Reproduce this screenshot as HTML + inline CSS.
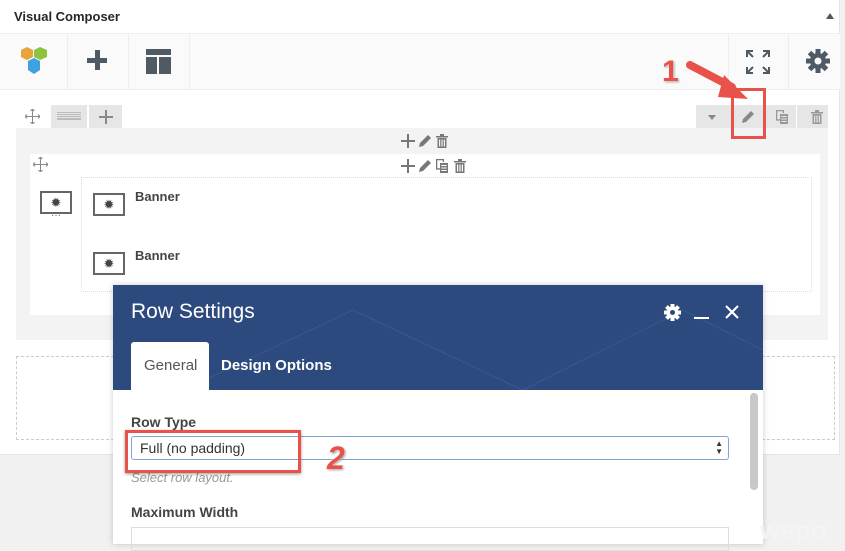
<!DOCTYPE html>
<html><head><style>
*{margin:0;padding:0;box-sizing:border-box}
body{width:845px;height:544px;overflow:hidden;background:#f1f1f1;font-family:"Liberation Sans",sans-serif;position:relative}
.a{position:absolute}
</style></head><body>
<svg width="0" height="0" style="position:absolute">
<defs>
<g id="tr"><rect x="1" y="3" width="12" height="1.5"/><rect x="5" y="1" width="4" height="2"/><path d="M2.5,5 h9 v10 h-9z M4,6.5 v7 h1.2 v-7z M6.4,6.5 v7 h1.2 v-7z M8.8,6.5 v7 h1.2 v-7z" fill-rule="evenodd"/></g>
<g id="pe"><path d="M2,14 L3,10 L11,2 L14,5 L6,13 Z"/></g>
<g id="cp"><path d="M1,1 h8 v3 h-1.3 v-1.7 h-5.4 v8 h2.7 v1.3 h-4z"/><path d="M5,5 h8 v10 h-8z M6.3,7 v1 h5.4 v-1z M6.3,9.5 v1 h5.4 v-1z M6.3,12 v1 h5.4 v-1z" fill-rule="evenodd"/></g>
<g id="pl"><rect x="0" y="6" width="14" height="2"/><rect x="6" y="0" width="2" height="14"/></g>
</defs></svg>
<div class="a" style="left:0;top:0;width:840px;height:455px;background:#fff;border-right:1px solid #e5e5e5;border-bottom:1px solid #e5e5e5"></div>
<div class="a" style="left:14px;top:9px;font-size:13px;font-weight:bold;color:#23282d">Visual Composer</div>
<div class="a" style="left:826px;top:13px;width:0;height:0;border-left:4px solid transparent;border-right:4px solid transparent;border-bottom:6px solid #555"></div>
<div class="a" style="left:0;top:33px;width:840px;height:57px;background:#fafafa;border-top:1px solid #eee;border-bottom:1px solid #eee"></div>
<div class="a" style="left:67px;top:34px;width:1px;height:56px;background:#eee"></div>
<div class="a" style="left:128px;top:34px;width:1px;height:56px;background:#eee"></div>
<div class="a" style="left:189px;top:34px;width:1px;height:56px;background:#eee"></div>
<div class="a" style="left:728px;top:34px;width:1px;height:56px;background:#eee"></div>
<div class="a" style="left:788px;top:34px;width:1px;height:56px;background:#eee"></div>
<svg class="a" style="left:20px;top:47px" width="30" height="30"><polygon points="1,3 7,0 13,3 13,10 7,13 1,10" fill="#e8a33a"/><polygon points="14,3 20,0 27,3 27,10 20,13 14,10" fill="#8cc43e"/><polygon points="8,14 14,11 20,14 20,23 14,27 8,23" fill="#3fa1e0"/></svg>
<div class="a" style="left:87px;top:58px;width:20px;height:5px;background:#4f5a65"></div>
<div class="a" style="left:95px;top:50px;width:5px;height:20px;background:#4f5a65"></div>
<div class="a" style="left:146px;top:49px;width:25px;height:6px;background:#4f5a65"></div>
<div class="a" style="left:146px;top:57px;width:11px;height:17px;background:#4f5a65"></div>
<div class="a" style="left:159px;top:57px;width:12px;height:17px;background:#4f5a65"></div>
<svg class="a" style="left:746px;top:50px" width="24" height="24" fill="none" stroke="#4f5a65" stroke-width="2"><path d="M1,7 V1 H7 M1,1 L7,7 M17,1 H23 V7 M23,1 L17,7 M1,17 V23 H7 M1,23 L7,17 M17,23 H23 V17 M23,23 L17,17"/></svg>
<svg class="a" style="left:806px;top:49px" width="24" height="24"><g fill="#4f5a65" transform="translate(12,12)"><circle r="8"/><rect x="-2.5" y="-12" width="5" height="24"/><rect x="-2.5" y="-12" width="5" height="24" transform="rotate(45)"/><rect x="-2.5" y="-12" width="5" height="24" transform="rotate(90)"/><rect x="-2.5" y="-12" width="5" height="24" transform="rotate(135)"/></g><circle cx="12" cy="12" r="3.5" fill="#fafafa"/></svg>
<!-- row -->
<svg class="a" style="left:25px;top:109px" width="15" height="15" fill="none" stroke="#888" stroke-width="1"><path d="M7.5,0 V15 M0,7.5 H15 M5.5,2 L7.5,0 L9.5,2 M5.5,13 L7.5,15 L9.5,13 M2,5.5 L0,7.5 L2,9.5 M13,5.5 L15,7.5 L13,9.5"/></svg>
<div class="a" style="left:51px;top:105px;width:36px;height:23px;background:#e6e6e6"><div style="margin:7px 6px;height:8px;border-top:1px solid #bbb;border-bottom:1px solid #bbb;background:repeating-linear-gradient(#e6e6e6 0 1px,#bbb 1px 2px)"></div></div>
<div class="a" style="left:89px;top:105px;width:33px;height:23px;background:#e6e6e6"></div>
<svg class="a" style="left:99px;top:110px" width="14" height="14" fill="#888"><use href="#pl"/></svg>
<div class="a" style="left:696px;top:105px;width:36px;height:23px;background:#e6e6e6"></div>
<div class="a" style="left:733px;top:105px;width:31px;height:23px;background:#e6e6e6"></div>
<div class="a" style="left:765px;top:105px;width:31px;height:23px;background:#e6e6e6"></div>
<div class="a" style="left:797px;top:105px;width:31px;height:23px;background:#e6e6e6"></div>
<div class="a" style="left:708px;top:115px;border-left:4px solid transparent;border-right:4px solid transparent;border-top:5px solid #888"></div>
<svg class="a" style="left:740px;top:109px" width="16" height="16" fill="#888"><use href="#pe"/></svg>
<svg class="a" style="left:775px;top:109px" width="16" height="16" fill="#999"><use href="#cp"/></svg>
<svg class="a" style="left:810px;top:109px" width="16" height="16" fill="#999"><use href="#tr"/></svg>
<div class="a" style="left:16px;top:128px;width:812px;height:212px;background:#f3f3f3"></div>
<svg class="a" style="left:400px;top:133px" width="60" height="16"><g fill="#777"><use href="#pl" transform="translate(1,1)"/><use href="#pe" x="17"/><use href="#tr" x="35"/></g></svg>
<div class="a" style="left:30px;top:154px;width:790px;height:161px;background:#fff"></div>
<svg class="a" style="left:33px;top:157px" width="15" height="15" fill="none" stroke="#888" stroke-width="1"><path d="M7.5,0 V15 M0,7.5 H15 M5.5,2 L7.5,0 L9.5,2 M5.5,13 L7.5,15 L9.5,13 M2,5.5 L0,7.5 L2,9.5 M13,5.5 L15,7.5 L13,9.5"/></svg>
<svg class="a" style="left:400px;top:158px" width="72" height="16"><g fill="#777"><use href="#pl" transform="translate(1,1)"/><use href="#pe" x="17"/><use href="#cp" x="35"/><use href="#tr" x="53"/></g></svg>
<div class="a" style="left:81px;top:177px;width:731px;height:115px;border:1px dotted #ddd"></div>
<div class="a" style="left:40px;top:191px;width:32px;height:23px;border:2px solid #666;text-align:center;font-size:13px;line-height:19px;color:#444">✹</div>
<div class="a" style="left:51px;top:210px;font-size:10px;color:#555">···</div>
<div class="a" style="left:93px;top:193px;width:32px;height:23px;border:2px solid #666;text-align:center;font-size:13px;line-height:19px;color:#444">✹</div>
<div class="a" style="left:93px;top:252px;width:32px;height:23px;border:2px solid #666;text-align:center;font-size:13px;line-height:19px;color:#444">✹</div>
<div class="a" style="left:135px;top:189px;font-size:13px;font-weight:bold;color:#444">Banner</div>
<div class="a" style="left:135px;top:248px;font-size:13px;font-weight:bold;color:#444">Banner</div>
<div class="a" style="left:16px;top:356px;width:819px;height:84px;border:1px dashed #ccc"></div>
<!-- modal -->
<div class="a" style="left:113px;top:285px;width:650px;height:259px;background:#fff;box-shadow:0 0 6px rgba(0,0,0,.2)"></div>
<div class="a" style="left:113px;top:285px;width:650px;height:105px;background:#2c4a7d;overflow:hidden">
<svg width="650" height="105"><g fill="none" stroke="#3a5890" stroke-width="1"><path d="M60,110 L240,25 L420,110"/><path d="M400,110 L570,25 L740,110"/></g></svg></div>
<div class="a" style="left:131px;top:300px;font-size:21px;color:#fff">Row Settings</div>
<svg class="a" style="left:664px;top:304px" width="17" height="17"><g fill="#fff" transform="translate(8.5,8.5)"><circle r="6"/><rect x="-2" y="-8.5" width="4" height="17"/><rect x="-2" y="-8.5" width="4" height="17" transform="rotate(45)"/><rect x="-2" y="-8.5" width="4" height="17" transform="rotate(90)"/><rect x="-2" y="-8.5" width="4" height="17" transform="rotate(135)"/></g><circle cx="8.5" cy="8.5" r="2.5" fill="#2c4a7d"/></svg>
<div class="a" style="left:694px;top:317px;width:15px;height:2px;background:#fff"></div>
<svg class="a" style="left:725px;top:305px" width="14" height="14" stroke="#fff" stroke-width="2.2"><path d="M1,1 L13,13 M13,1 L1,13"/></svg>
<div class="a" style="left:131px;top:342px;width:78px;height:48px;background:#fff;border-radius:3px 3px 0 0"></div>
<div class="a" style="left:144px;top:357px;font-size:15px;color:#555">General</div>
<div class="a" style="left:221px;top:357px;font-size:15px;color:#fff;font-weight:bold">Design Options</div>
<div class="a" style="left:750px;top:393px;width:8px;height:97px;background:#c8c8c8;border-radius:4px"></div>
<div class="a" style="left:131px;top:414px;font-size:14px;color:#444;font-weight:bold">Row Type</div>
<div class="a" style="left:131px;top:436px;width:598px;height:24px;border:1px solid #7fa4d4;border-radius:3px;font-size:14px;color:#333;padding:3px 8px">Full (no padding)<span style="position:absolute;right:5px;top:3px;font-size:8px;line-height:8px">▲<br>▼</span></div>
<div class="a" style="left:131px;top:470px;font-size:13px;color:#999;font-style:italic">Select row layout.</div>
<div class="a" style="left:131px;top:504px;font-size:14px;color:#444;font-weight:bold">Maximum Width</div>
<div class="a" style="left:131px;top:527px;width:598px;height:24px;border:1px solid #ddd"></div>
<div class="a" style="left:760px;top:515px;font-size:26px;color:#f4f4f4;font-weight:bold">wepo</div>
<!-- annotations -->
<div class="a" style="left:731px;top:88px;width:35px;height:51px;border:3px solid #e8524a"></div>
<div class="a" style="left:125px;top:430px;width:176px;height:43px;border:3px solid #e8524a;box-shadow:0 1px 3px rgba(0,0,0,.4)"></div>
<svg class="a" style="left:680px;top:55px" width="80" height="60"><path d="M10,10 L52,32" stroke="#e8524a" stroke-width="8" stroke-linecap="round"/><polygon points="44,20 68,44 38,42" fill="#e8524a"/></svg>
<div class="a" style="left:662px;top:55px;font-size:30px;font-weight:bold;color:#e8524a;text-shadow:0 0 2px #fff,1px 1px 2px #888">1</div>
<div class="a" style="left:327px;top:440px;font-size:32px;font-weight:bold;font-style:italic;color:#e8524a;text-shadow:0 0 2px #fff,1px 1px 2px #888">2</div>
</body></html>
